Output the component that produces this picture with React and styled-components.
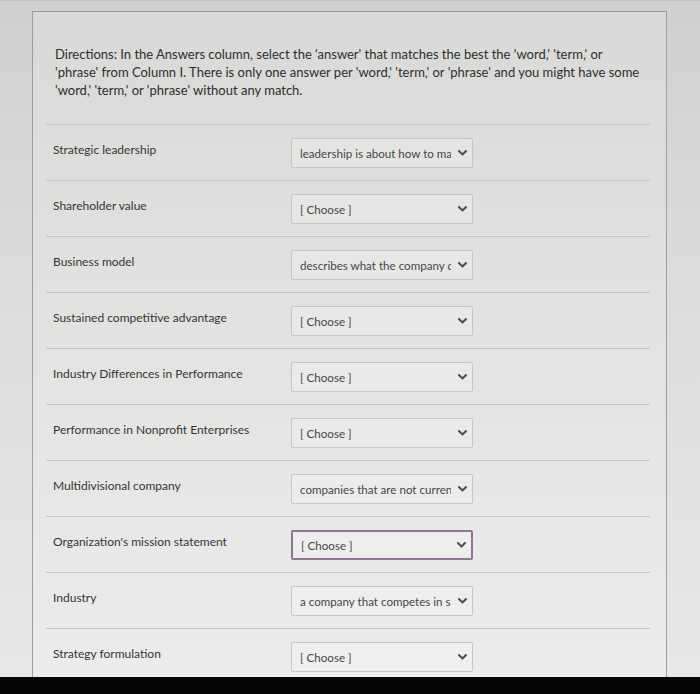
import React from 'react';
import styled, { createGlobalStyle } from 'styled-components';

const GlobalStyle = createGlobalStyle`
  html, body {
    margin: 0;
    padding: 0;
  }
  body {
    font-family: Lato, "Liberation Sans", sans-serif;
    background: #000;
  }
`;

const rows = [
  { term: 'Strategic leadership', answer: 'leadership is about how to manage' },
  { term: 'Shareholder value', answer: null },
  { term: 'Business model', answer: 'describes what the company does' },
  { term: 'Sustained competitive advantage', answer: null },
  { term: 'Industry Differences in Performance', answer: null },
  { term: 'Performance in Nonprofit Enterprises', answer: null },
  { term: 'Multidivisional company', answer: 'companies that are not currently' },
  { term: "Organization's mission statement", answer: null, focused: true },
  { term: 'Industry', answer: 'a company that competes in similar' },
  { term: 'Strategy formulation', answer: null },
];

const Chevron = () => (
  <ChevronIcon width="9" height="6" viewBox="0 0 9 6">
    <path d="M1 1 L4.5 4.5 L8 1" fill="none" stroke="#4d4d4d" strokeWidth="2" strokeLinecap="round" strokeLinejoin="round" />
  </ChevronIcon>
);

const App = () => {
  return (
    <>
      <GlobalStyle />
      <Page>
        <Screen>
          <Card>
            <Directions>
              Directions: In the Answers column, select the 'answer' that matches the best the 'word,' 'term,' or
              <br />
              'phrase' from Column I. There is only one answer per 'word,' 'term,' or 'phrase' and you might have some
              <br />
              'word,' 'term,' or 'phrase' without any match.
            </Directions>
            <List>
              {rows.map((row) => (
                <Row key={row.term}>
                  <Term>{row.term}</Term>
                  <SelectBox $focused={row.focused}>
                    <SelectText>{row.answer || '[ Choose ]'}</SelectText>
                    <Chevron />
                  </SelectBox>
                </Row>
              ))}
            </List>
          </Card>
        </Screen>
        <BottomBar />
      </Page>
    </>
  );
};

export default App;

const Page = styled.div`
  height: 694px;
  display: flex;
  flex-direction: column;
  overflow: hidden;
  background: linear-gradient(180deg, #d0d0ce 0%, #dcdcdb 40%, #e8e8e9 100%);
`;

const Screen = styled.div`
  flex: 1;
  min-height: 0;
  padding: 10px 33px 0 32px;
  border-top: 1px solid #c2c2c0;
`;

const Card = styled.div`
  height: 100%;
  box-sizing: border-box;
  border: 1px solid #9e9e9e;
  border-bottom: none;
  padding: 0 16px 0 13px;
  background: linear-gradient(180deg, #d9d9d7 0%, #e2e2e1 45%, #ececec 100%);
  overflow: hidden;
`;

const Directions = styled.p`
  margin: 0;
  padding: 33px 0 0 9px;
  height: 112px;
  box-sizing: border-box;
  font-size: 13px;
  line-height: 18px;
  color: #2e2e2e;
  white-space: nowrap;
`;

const List = styled.div`
  display: flex;
  flex-direction: column;
`;

const Row = styled.div`
  display: grid;
  grid-template-columns: 238px 182px;
  align-items: start;
  height: 56px;
  box-sizing: border-box;
  padding: 13px 0 12px 7px;
  border-top: 1px solid #c5c5c4;
`;

const Term = styled.div`
  padding-top: 3px;
  font-size: 12px;
  line-height: 18px;
  color: #353535;
`;

const SelectBox = styled.div`
  display: flex;
  align-items: center;
  gap: 7px;
  height: 30px;
  box-sizing: border-box;
  padding: 0 5px 0 8px;
  border: ${(p) => (p.$focused ? '2px solid #927592' : '1px solid #c6c6c4')};
  border-radius: 2px;
  background: rgba(255, 255, 255, 0.22);
`;

const SelectText = styled.span`
  flex: 1;
  min-width: 0;
  overflow: hidden;
  white-space: nowrap;
  font-size: 11.6px;
  color: #474747;
`;

const ChevronIcon = styled.svg`
  flex-shrink: 0;
`;

const BottomBar = styled.div`
  height: 17px;
  background: #050505;
`;
